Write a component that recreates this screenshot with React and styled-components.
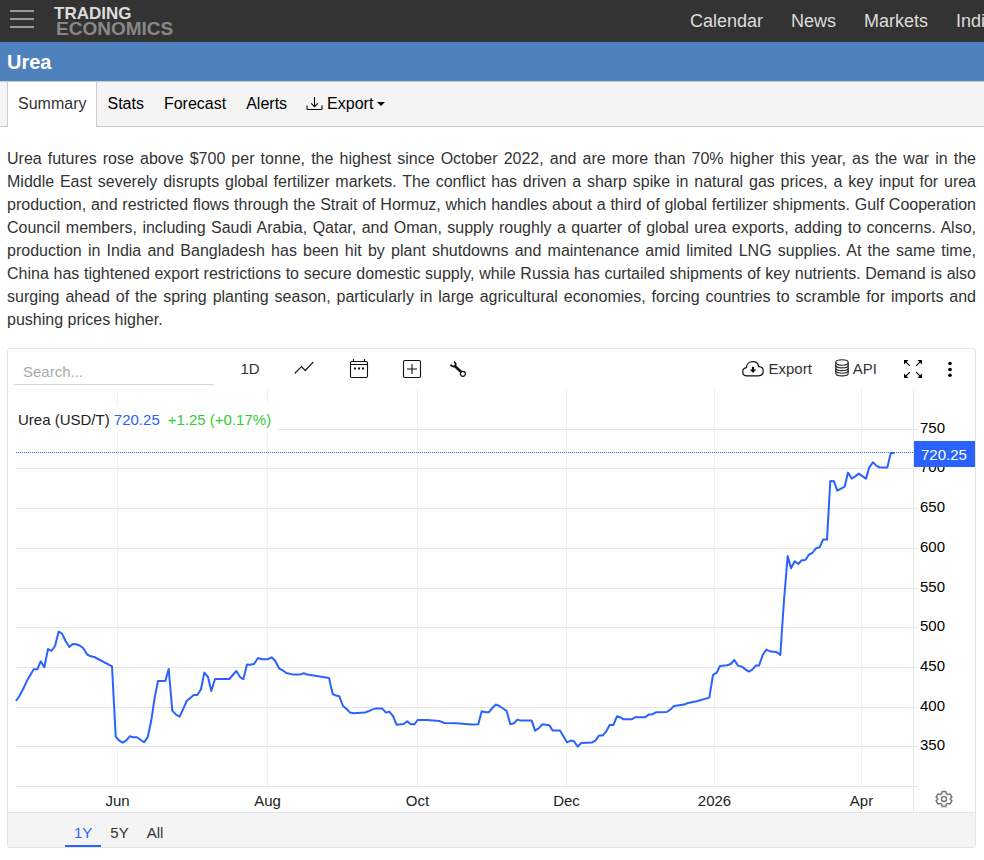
import React, { useLayoutEffect, useRef, useState } from 'react'
import styled, { createGlobalStyle, ThemeProvider } from 'styled-components'

const theme = {
  font: '"Liberation Sans", Arial, sans-serif',
  dark: '#333333',
  header: '#4f81bd',
  panel: '#f4f4f4',
  border: '#e5e5e8',
  tabBorder: '#cccccc',
  blue: '#2962ff',
  green: '#32cd32'
}

const GlobalStyle = createGlobalStyle`
  * {
    box-sizing: border-box;
  }

  body {
    margin: 0;
    background: #ffffff;
    color: #333333;
    font-family: ${({ theme }) => theme.font};
    font-size: 16px;
  }

  button,
  input {
    font-family: inherit;
  }
`

const TopBar = styled.header`
  height: 42px;
  display: flex;
  align-items: center;
  overflow: hidden;
  background: ${({ theme }) => theme.dark};
`

const PlainButton = styled.button`
  display: flex;
  align-items: center;
  padding: 0;
  border: 0;
  background: none;
  color: inherit;
  cursor: pointer;
`

const MenuButton = styled(PlainButton)`
  flex: none;
  height: 38px;
  align-self: flex-start;
  margin: 0 20px 0 10px;
`

const Logo = styled.a`
  flex: none;
  align-self: flex-start;
  padding-top: 5px;
  display: flex;
  flex-direction: column;
  font-weight: bold;
  text-decoration: none;
`

const LogoTop = styled.span`
  color: #dddddd;
  font-size: 17px;
  line-height: 17px;
`

const LogoBottom = styled.span`
  padding-left: 2px;
  color: #888888;
  font-size: 19px;
  line-height: 13px;
`

const Nav = styled.nav`
  flex: none;
  width: 294px;
  margin-left: auto;
  display: flex;
  gap: 28px;
  overflow: hidden;
`

const NavLink = styled.a`
  flex: none;
  color: #dddddd;
  font-size: 18px;
  line-height: 42px;
  text-decoration: none;
`

const TitleBar = styled.div`
  height: 39px;
  padding: 0 7px;
  background: ${({ theme }) => theme.header};
`

const Title = styled.h1`
  margin: 0;
  color: #ffffff;
  font-size: 20px;
  line-height: 41px;
`

const Tabs = styled.nav`
  display: flex;
  height: 46px;
  padding-left: 7px;
  border-top: 1px solid ${({ theme }) => theme.tabBorder};
  border-bottom: 1px solid ${({ theme }) => theme.tabBorder};
  background: ${({ theme }) => theme.panel};
`

const Tab = styled.a`
  height: 45px;
  padding: 0 10px;
  border: solid ${({ theme }) => theme.tabBorder};
  border-width: ${({ $active }) => ($active ? '0 1px' : '0')};
  background: ${({ $active }) => ($active ? '#ffffff' : 'transparent')};
  color: ${({ $active }) => ($active ? '#333333' : '#000000')};
  line-height: 43px;
  text-decoration: none;
`

const TabButton = styled(PlainButton)`
  height: 43px;
  padding: 0 9px;
  gap: 4px;
  color: #000000;
  font-size: 16px;
`

const Caret = styled.span`
  border: 4px solid transparent;
  border-top-color: #000000;
  border-bottom: 0;
`

const Main = styled.main`
  padding: 20px 8px 0 7px;
`

const Summary = styled.p`
  margin: 0 0 17px;
  line-height: 23px;
  text-align: justify;
`

const Panel = styled.section`
  border: 1px solid ${({ theme }) => theme.border};
  border-radius: 3px;
  overflow: hidden;
`

const Toolbar = styled.div`
  height: 40px;
  display: flex;
  align-items: flex-start;
  padding: 0 7px 0 6px;
`

const Search = styled.input`
  width: 200px;
  height: 27px;
  margin: 9px 9px 4px 0;
  padding: 0 9px;
  border: 0;
  border-bottom: 1px solid #d8d8d8;
  background: none;
  font-size: 15px;

  &::placeholder {
    color: #aaaaaa;
    opacity: 1;
  }
`

const ToolButton = styled(PlainButton)`
  width: ${({ $width }) => $width}px;
  height: ${({ $text }) => ($text ? 38 : 40)}px;
  justify-content: center;
  color: ${({ theme }) => theme.dark};
  font-size: 15px;
`

const Actions = styled.div`
  display: flex;
  margin-left: auto;
`

const ActionButton = styled(PlainButton)`
  height: 38px;
  margin-right: ${({ $space }) => $space}px;
  gap: 4px;
  color: ${({ theme }) => theme.dark};
  font-size: 15px;
`

const ChartArea = styled.div`
  position: relative;
  height: 423px;

  > svg {
    display: block;
  }
`

const Legend = styled.div`
  position: absolute;
  top: 15px;
  left: 9px;
  padding: 3px 6px 0 1px;
  background: #ffffff;
  color: #222222;
  font-size: 15px;
  line-height: 25px;
`

const Price = styled.span`
  color: ${({ theme }) => theme.blue};
`

const Change = styled.span`
  margin-left: 8px;
  color: ${({ theme }) => theme.green};
`

const SettingsButton = styled(PlainButton)`
  position: absolute;
  right: 22px;
  bottom: 4px;
`

const AxisText = styled.text`
  fill: ${({ $dark }) => ($dark ? '#000000' : '#222222')};
  font-size: 15px;
`

const Ranges = styled.div`
  display: flex;
  height: 35px;
  padding-left: 57px;
  border-top: 1px solid ${({ theme }) => theme.border};
  background: ${({ theme }) => theme.panel};
`

const RangeButton = styled(PlainButton)`
  padding: 7px 9px 0;
  border-bottom: 2px solid ${({ $active, theme }) => ($active ? theme.blue : 'transparent')};
  color: ${({ $active, theme }) => ($active ? theme.blue : theme.dark)};
  font-size: 15px;
`

const MenuIcon = () => (
  <svg width='24' height='18' stroke='#999999' strokeWidth='2'>
    <path d='M0 1H24M0 9H24M0 17H24' />
  </svg>
)

const DownloadIcon = () => (
  <svg width='17' height='16' fill='none' stroke='#000000' strokeWidth='1.1'>
    <path d='M1 9.5V12.5Q1 13.5 2 13.5H15Q16 13.5 16 12.5V9.5M8.5 1V10.5M5.2 7.4L8.5 10.7L11.8 7.4' />
  </svg>
)

const LineIcon = () => (
  <svg width='20' height='16' fill='none' stroke='#222222' strokeWidth='1.2'>
    <path d='M0.7 12.5L7.5 5.5L11.2 9.5L19.3 1' />
  </svg>
)

const CalendarIcon = () => (
  <svg width='20' height='20' fill='none' stroke='#111111' strokeWidth='1.1'>
    <rect x='1.5' y='2.5' width='17' height='16' rx='1.5' />
    <path d='M1.5 5.5H18.5M4.5 0V2.5M15.5 0V2.5' />
    <path d='M5 9.5H7M9 9.5H11M13 9.5H15' strokeWidth='2' />
  </svg>
)

const PlusIcon = () => (
  <svg width='20' height='20' fill='none' stroke='#111111' strokeWidth='1.1'>
    <rect x='1.5' y='1.5' width='17' height='17' rx='1.5' />
    <path d='M5 10H15M10 5V15' />
  </svg>
)

const WrenchIcon = () => (
  <svg width='18' height='18' fill='none' stroke='#111111'>
    <path d='M6 6.3L12.5 12.2' strokeWidth='2.6' />
    <path d='M1.5 4.7C2.6 6.8 5 7 6.2 5.6C7.3 4.2 6.6 2.6 5 1.9' strokeWidth='1.8' />
    <circle cx='13.9' cy='13.8' r='2.5' strokeWidth='1.2' />
  </svg>
)

const CloudIcon = () => (
  <svg width='22' height='17' fill='none' stroke='#111111' strokeWidth='1.2'>
    <path d='M5 15.8C2.4 15.8 0.7 14 0.7 11.7C0.7 9.5 2.3 8 4.4 7.7C4.6 4 7.3 1.7 10.7 1.7C14 1.7 16.2 3.7 16.7 6.6C19.5 6.7 21.3 8.5 21.3 11.1C21.3 13.9 19.4 15.8 16.6 15.8Z' />
    <path d='M11 6.8V10.5' strokeWidth='2.2' />
    <path d='M7.8 9.5H14.2L11 13.1Z' fill='#111111' stroke='none' />
  </svg>
)

const DatabaseIcon = () => (
  <svg width='14' height='18' fill='none' stroke='#222222' strokeWidth='1.1'>
    <ellipse cx='7' cy='3.5' rx='6.2' ry='2.7' />
    <path d='M0.8 3.5V14.2C0.8 17.8 13.2 17.8 13.2 14.2V3.5' />
    <path d='M0.8 6.2C0.8 9.8 13.2 9.8 13.2 6.2M0.8 8.9C0.8 12.5 13.2 12.5 13.2 8.9M0.8 11.6C0.8 15.2 13.2 15.2 13.2 11.6' />
  </svg>
)

const ExpandIcon = () => (
  <svg width='20' height='20' fill='#000000' stroke='#000000' strokeWidth='1.1'>
    <path d='M2 2L6.8 6.8M18 2L13.2 6.8M2 18L6.8 13.2M18 18L13.2 13.2' />
    <path d='M1 1H5.5L1 5.5ZM19 1V5.5L14.5 1ZM1 19V14.5L5.5 19ZM19 19H14.5L19 14.5Z' stroke='none' />
  </svg>
)

const DotsIcon = () => (
  <svg width='4' height='16' fill='#000000'>
    <circle cx='2' cy='2.5' r='1.8' />
    <circle cx='2' cy='8.5' r='1.8' />
    <circle cx='2' cy='14.2' r='1.8' />
  </svg>
)

const GearIcon = () => (
  <svg width='18' height='18' viewBox='0 0 24 24' fill='none' stroke='#777777' strokeWidth='2' strokeLinejoin='round'>
    <path d='M9.6 2H14.4L15.1 5L17.2 6.2L20.1 5.3L22.5 9.5L20.3 11.6V12.4L22.5 14.5L20.1 18.7L17.2 17.8L15.1 19L14.4 22H9.6L8.9 19L6.8 17.8L3.9 18.7L1.5 14.5L3.7 12.4V11.6L1.5 9.5L3.9 5.3L6.8 6.2L8.9 5Z' />
    <circle cx='12' cy='12' r='3.4' />
  </svg>
)

// Plot geometry at its base width; x values stretch with the panel
const BASE_WIDTH = 897
const LEFT = 8
const AXIS = 62
const BOTTOM = 397
const ORIGIN = { x: 16, y: 389 }

const months = [
  ['Jun', 117],
  ['Aug', 267],
  ['Oct', 417],
  ['Dec', 566],
  ['2026', 714],
  ['Apr', 861]
]

const levels = [
  [750, 40],
  [700, 79],
  [650, 119],
  [600, 159],
  [550, 199],
  [500, 238],
  [450, 278],
  [400, 318],
  [350, 357]
]

const series = `
16,700.7 19.3,696 23,689 26.7,681 30.3,674.7 33.7,669 37.3,669 40.7,661 44.3,667
48,648.7 51.3,650.7 55,645.7 58.7,631.3 62,633.3 65.7,641 69.3,646.7 72.7,643.7
76.3,644 80,645.5 83.3,648 87,654 90.7,656 94.3,656.7 112,666 115.7,736.3 119,740
122.7,742.3 126.3,740 129.7,736 133.3,737 137,737 144,742 147.7,737 151.3,720
154.7,697.3 158,680.7 165.3,680.7 168.7,668.7 172.3,710.3 176,714.3 179.7,716.3
186.7,700.7 193.7,694.7 197.3,694.7 201,689 204.3,672.3 208,676.7 211.3,690.7
215,678.7 229.3,678.7 236.3,670.7 240,676.7 243.3,679 247,664.3 250,664.5
254,663.7 258,657.7 261.7,659 267.3,659 271.7,657 275.3,660.7 279,668 282.7,670
286.3,672.7 293.3,674.3 300,674.3 303.7,673 307.3,674.3 329,677.7 332.7,693.7
336,695.3 339.3,696 343,705.7 346.7,708.7 350,712.3 353.7,713 365,712.3 368.3,711
372,709.3 375.3,708.3 382.3,708.3 386,712.3 389.3,711.3 393,715.7 396.7,724.5
403.7,723.7 407.3,721 410.7,724 414.3,724 417.7,719.7 426.7,719.7 439.3,720.7
444.3,722.7 456.7,723 471.7,724.3 478.3,724 481.7,711 485.3,712 488.7,712
492.3,707.7 496,704.3 499.3,705.7 506.7,710.7 510.3,724 514,723 517.3,719.3
520.7,720.3 531.7,720.3 535,730.3 538.7,728 542.3,724 549.3,725 552.7,730.3
560,730.3 567,742 570.7,740.3 574,741 577.7,746.3 581.3,742.7 591.7,742.3
595.3,740.3 599,735.3 602.7,735.3 606.3,731 609.7,724.7 613.3,724.7 617,716
620.3,717 623.7,719 631.7,719 635,717 645.3,717 648.7,714.3 652.3,714 655.7,712
666.7,711.7 670.3,709.3 674,705.7 684,704.3 688,702.7 696.7,701 709.3,697.3
713,674.7 716.7,672.3 720,665.7 727.3,665 730.7,663.7 734.3,659.7 738,665.3
741.7,666.3 748.7,671.3 752.3,669.3 755.7,665.3 759,665.3 762.7,654.7 766.3,649.3
770,651 777,652 780.3,654.7 784,600 787.7,555.7 791,568 794.7,561 798.3,563.7
801.7,560 805.3,559.7 809,554.3 812.3,552.7 816,548 819.7,547 823,539.3 827,539.3
830.3,480.7 834,481 837.3,490.3 844.7,486.3 848,472.3 851.7,478.3 855,476.3
858.7,473.3 866,478.3 869.3,467 873,462 876.3,465.3 879.7,467.3 887.3,467.3
890.7,453 894.3,452.5
`
  .trim()
  .split(/\s+/)
  .map((pair) => pair.split(',').map(Number))

const Chart = () => {
  const area = useRef(null)
  const [width, setWidth] = useState(BASE_WIDTH + LEFT + AXIS)

  useLayoutEffect(() => {
    const measure = () => setWidth(area.current.clientWidth)
    measure()
    window.addEventListener('resize', measure)
    return () => window.removeEventListener('resize', measure)
  }, [])

  const right = width - AXIS
  const scaleX = (x) => LEFT + ((x - ORIGIN.x) * (right - LEFT)) / BASE_WIDTH
  const gridX = (x) => Math.round(scaleX(x)) + 0.5
  const points = series
    .map(([x, y]) => `${scaleX(x).toFixed(1)},${(y - ORIGIN.y + 0.3).toFixed(1)}`)
    .join(' ')

  return (
    <ChartArea ref={area}>
      <svg width={width} height='423' role='img' aria-label='Urea price, one year'>
        <g stroke={theme.border}>
          {months.map(([label, x]) => (
            <line key={label} x1={gridX(x)} x2={gridX(x)} y1='0' y2={BOTTOM} stroke='#eef0f4' />
          ))}
          {levels.map(([label, y]) => (
            <line key={label} x1={LEFT} x2={right + 5} y1={y + 0.5} y2={y + 0.5} />
          ))}
          <line x1={LEFT} x2={right + 5} y1={BOTTOM + 0.5} y2={BOTTOM + 0.5} />
          <line x1={right + 0.5} x2={right + 0.5} y1='0' y2='423' />
        </g>
        <line x1={LEFT} x2={right} y1='63.5' y2='63.5' stroke={theme.blue} strokeDasharray='1 1' />
        <polyline points={points} fill='none' stroke={theme.blue} strokeWidth='2' strokeLinejoin='round' />
        {levels.map(([label, y]) => (
          <AxisText key={label} x={right + 7} y={y + 4} $dark>{label}</AxisText>
        ))}
        {months.map(([label, x]) => (
          <AxisText key={label} x={gridX(x)} y='417' textAnchor='middle'>{label}</AxisText>
        ))}
        <rect x={right + 1} y='52' width='61' height='26' fill={theme.blue} />
        <text x={right + 8} y='71' fill='#ffffff' fontSize='15'>720.25</text>
      </svg>
      <Legend>
        Urea (USD/T) <Price>720.25</Price>
        <Change>+1.25 (+0.17%)</Change>
      </Legend>
      <SettingsButton aria-label='Chart settings'><GearIcon /></SettingsButton>
    </ChartArea>
  )
}

const App = () => (
  <ThemeProvider theme={theme}>
    <GlobalStyle />
    <TopBar>
      <MenuButton aria-label='Menu'><MenuIcon /></MenuButton>
      <Logo href='#'>
        <LogoTop>TRADING</LogoTop>
        <LogoBottom>ECONOMICS</LogoBottom>
      </Logo>
      <Nav>
        {['Calendar', 'News', 'Markets', 'Indicators'].map((item) => (
          <NavLink key={item} href='#'>{item}</NavLink>
        ))}
      </Nav>
    </TopBar>
    <TitleBar>
      <Title>Urea</Title>
    </TitleBar>
    <Tabs>
      <Tab href='#' $active>Summary</Tab>
      <Tab href='#'>Stats</Tab>
      <Tab href='#'>Forecast</Tab>
      <Tab href='#'>Alerts</Tab>
      <TabButton>
        <DownloadIcon />
        Export
        <Caret />
      </TabButton>
    </Tabs>
    <Main>
      <Summary>
        Urea futures rose above $700 per tonne, the highest since October 2022, and are more than
        70% higher this year, as the war in the Middle East severely disrupts global fertilizer
        markets. The conflict has driven a sharp spike in natural gas prices, a key input for urea
        production, and restricted flows through the Strait of Hormuz, which handles about a third
        of global fertilizer shipments. Gulf Cooperation Council members, including Saudi Arabia,
        Qatar, and Oman, supply roughly a quarter of global urea exports, adding to concerns. Also,
        production in India and Bangladesh has been hit by plant shutdowns and maintenance amid
        limited LNG supplies. At the same time, China has tightened export restrictions to secure
        domestic supply, while Russia has curtailed shipments of key nutrients. Demand is also
        surging ahead of the spring planting season, particularly in large agricultural economies,
        forcing countries to scramble for imports and pushing prices higher.
      </Summary>
      <Panel>
        <Toolbar>
          <Search type='text' placeholder='Search...' aria-label='Search' />
          <ToolButton $width={54} $text>1D</ToolButton>
          <ToolButton $width={54} aria-label='Chart type'><LineIcon /></ToolButton>
          <ToolButton $width={56} aria-label='Date range'><CalendarIcon /></ToolButton>
          <ToolButton $width={50} aria-label='Compare'><PlusIcon /></ToolButton>
          <ToolButton $width={42} aria-label='Tools'><WrenchIcon /></ToolButton>
          <Actions>
            <ActionButton $space={23}><CloudIcon />Export</ActionButton>
            <ActionButton $space={17}><DatabaseIcon />API</ActionButton>
            <ToolButton $width={38} aria-label='Full screen'><ExpandIcon /></ToolButton>
            <ToolButton $width={36} aria-label='More'><DotsIcon /></ToolButton>
          </Actions>
        </Toolbar>
        <Chart />
        <Ranges>
          <RangeButton $active>1Y</RangeButton>
          <RangeButton>5Y</RangeButton>
          <RangeButton>All</RangeButton>
        </Ranges>
      </Panel>
    </Main>
  </ThemeProvider>
)

export default App
